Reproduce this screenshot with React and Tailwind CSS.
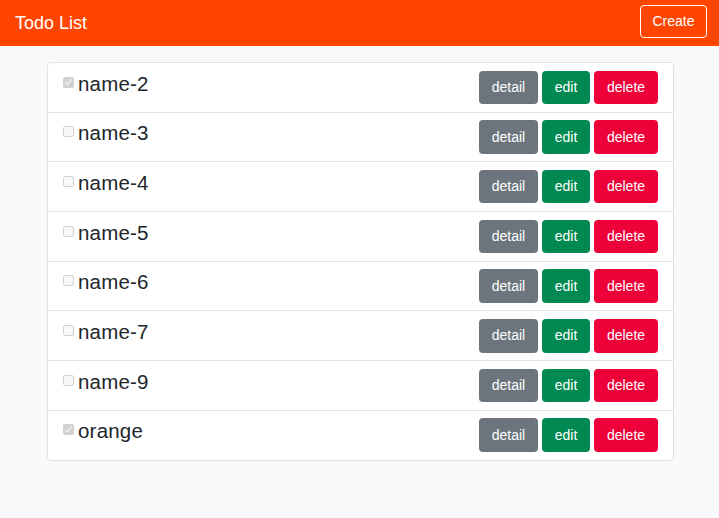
import React from "react";

const todos = [
	{ id: 2, name: "name-2", done: true },
	{ id: 3, name: "name-3", done: false },
	{ id: 4, name: "name-4", done: false },
	{ id: 5, name: "name-5", done: false },
	{ id: 6, name: "name-6", done: false },
	{ id: 7, name: "name-7", done: false },
	{ id: 9, name: "name-9", done: false },
	{ id: 10, name: "orange", done: true },
];

const TodoRow = ({ todo }) => (
	<li className="flex items-start justify-between pl-[15px] pr-[15px] py-[7.6px] border-b border-[#dee2e6] last:border-b-0">
		<div className="flex items-start">
			<input
				type="checkbox"
				checked={todo.done}
				readOnly
				disabled
				className="mt-[6px] mr-[4px] w-[11px] h-[11px]"
			/>
			<span className="text-[20.5px] leading-[24px] text-[#212529] tracking-[0.2px] pt-[1px]">{todo.name}</span>
		</div>
		<div className="flex gap-1">
			<button className="h-[33.5px] w-[59px] rounded-[4px] bg-[#6c757d] text-white text-[14px]">
				detail
			</button>
			<button className="h-[33.5px] w-[48px] rounded-[4px] bg-[#008a52] text-white text-[14px]">
				edit
			</button>
			<button className="h-[33.5px] w-[64px] rounded-[4px] bg-[#ee0038] text-white text-[14px]">
				delete
			</button>
		</div>
	</li>
);

export default function App() {
	return (
		<div className="min-h-[518px] bg-[#f8f9fa] font-['Liberation_Sans',Arial,sans-serif]">
			<header className="h-[46px] bg-[#ff4500] flex items-center justify-between pl-[15px] pr-[12px]">
				<h1 className="text-white text-[18px]">Todo List</h1>
				<button className="h-[33px] w-[67px] border border-white rounded-[4px] text-white text-[14px] -mt-[3px]">
					Create
				</button>
			</header>
			<ul className="w-[627px] ml-[47px] mt-[16px] bg-white border border-[#dee2e6] rounded-[4px]">
				{todos.map((t) => (
					<TodoRow key={t.id} todo={t} />
				))}
			</ul>
		</div>
	);
}
